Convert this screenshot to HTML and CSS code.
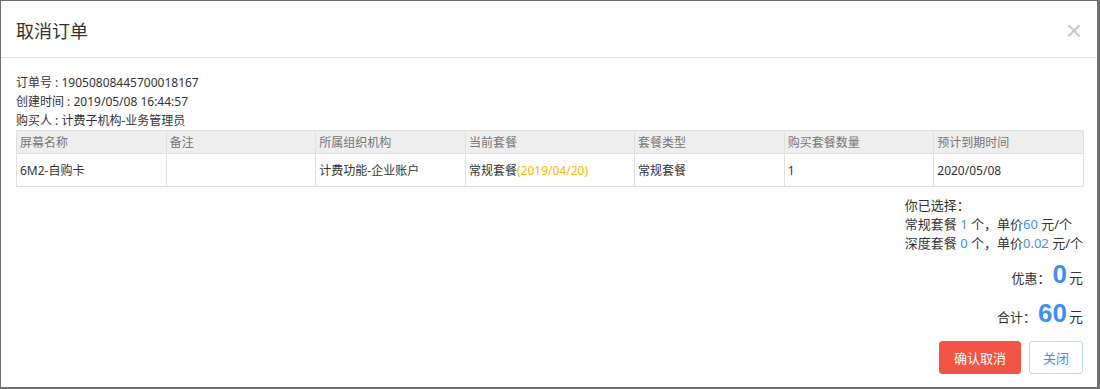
FILE: index.html
```html
<!DOCTYPE html>
<html lang="zh-CN">
<head>
    <meta charset="UTF-8">
    <title>取消订单</title>
    <link rel="stylesheet" href="styles.css">
</head>
<body>
    <div class="modal">
        <div class="modal-header">
            <h3>取消订单</h3>
            <span class="close">&times;</span>
        </div>
        <div class="modal-body">
            <div class="info">
                <p>订单号 : 19050808445700018167</p>
                <p>创建时间 : 2019/05/08 16:44:57</p>
                <p>购买人 : 计费子机构-业务管理员</p>
            </div>
            <table class="order-table">
                <thead>
                    <tr>
                        <th>屏幕名称</th>
                        <th>备注</th>
                        <th>所属组织机构</th>
                        <th>当前套餐</th>
                        <th>套餐类型</th>
                        <th>购买套餐数量</th>
                        <th>预计到期时间</th>
                    </tr>
                </thead>
                <tbody>
                    <tr>
                        <td>6M2-自购卡</td>
                        <td></td>
                        <td>计费功能-企业账户</td>
                        <td>常规套餐<span class="date">(2019/04/20)</span></td>
                        <td>常规套餐</td>
                        <td>1</td>
                        <td>2020/05/08</td>
                    </tr>
                </tbody>
            </table>
            <div class="summary">
                <div class="chosen">
                    <p>你已选择：</p>
                    <p>常规套餐 <span class="num">1</span> 个，单价<span class="num">60</span> 元/个</p>
                    <p>深度套餐 <span class="num">0</span> 个，单价<span class="num">0.02</span> 元/个</p>
                </div>
                <div class="total discount">优惠：<span class="big">0</span><span class="unit">元</span></div>
                <div class="total sum">合计：<span class="big">60</span><span class="unit">元</span></div>
                <div class="buttons">
                    <button class="btn btn-danger">确认取消</button>
                    <button class="btn btn-plain">关闭</button>
                </div>
            </div>
        </div>
    </div>
</body>
</html>
```

FILE: styles.css
```css
body {
    margin: 0;
    font-family: "Noto Sans", "Noto Sans CJK SC", sans-serif;
    background: #fff;
    color: #333;
}

.modal {
    width: 1100px;
    height: 389px;
    box-sizing: border-box;
    border-top: 1px solid #6f6f6f;
    border-left: 1px solid #6f6f6f;
    border-right: 3px solid #6f6f6f;
    border-bottom: 2px solid #6f6f6f;
    background: #fff;
}

.modal-header {
    height: 56px;
    border-bottom: 1px solid #e5e5e5;
    display: flex;
    align-items: center;
    justify-content: space-between;
    padding: 0 15px;
}

.modal-header h3 {
    margin: 0;
    font-size: 18px;
    font-weight: normal;
    color: #333;
    position: relative;
    top: 1px;
}

.close {
    font-size: 28px;
    color: #c8c8c8;
    font-family: "Liberation Sans", sans-serif;
    line-height: 1;
    position: relative;
    top: 2px;
}

.modal-body {
    padding: 15px 13px 0 15px;
}

.info p {
    margin: 0;
    font-size: 12px;
    line-height: 19px;
}

.order-table {
    width: 1068px;
    border-collapse: collapse;
    font-size: 12px;
    table-layout: fixed;
}

.order-table th,
.order-table td {
    border: 1px solid #e0e0e0;
    text-align: left;
    padding: 0 3px;
}

.order-table th {
    background: #eeeeee;
    color: #777;
    font-weight: normal;
    height: 22px;
}

.order-table td {
    height: 32px;
}

.order-table th:nth-child(4),
.order-table td:nth-child(4) {
    width: 162px;
}

.date {
    color: #f8b600;
}

.summary {
    display: flex;
    flex-direction: column;
    align-items: flex-end;
    font-size: 13px;
    padding-right: 1px;
}

.chosen {
    margin-top: 9px;
}

.chosen p {
    margin: 0;
    line-height: 19px;
}

.num {
    color: #3e8ef7;
}

.total {
    display: flex;
    align-items: baseline;
    line-height: 34px;
}

.discount {
    margin-top: 4px;
}

.sum {
    margin-top: 1px;
}

.big {
    color: #3e8ef7;
    font-family: "Liberation Sans", sans-serif;
    font-weight: bold;
    font-size: 26px;
    margin: 0 2px 0 2px;
}

.unit {
    font-size: 14px;
}

.buttons {
    display: flex;
    gap: 8px;
    margin-top: 7px;
}

.btn {
    font-family: "Noto Sans CJK SC", sans-serif;
    font-size: 13px;
    height: 33px;
    border-radius: 3px;
    cursor: pointer;
    padding: 0 13px;
}

.btn-danger {
    background: #f25545;
    border: 1px solid #f25545;
    color: #fff;
    width: 82px;
}

.btn-plain {
    background: #fff;
    border: 1px solid #bcd8ff;
    color: #3e8ef7;
    width: 54px;
}
```
